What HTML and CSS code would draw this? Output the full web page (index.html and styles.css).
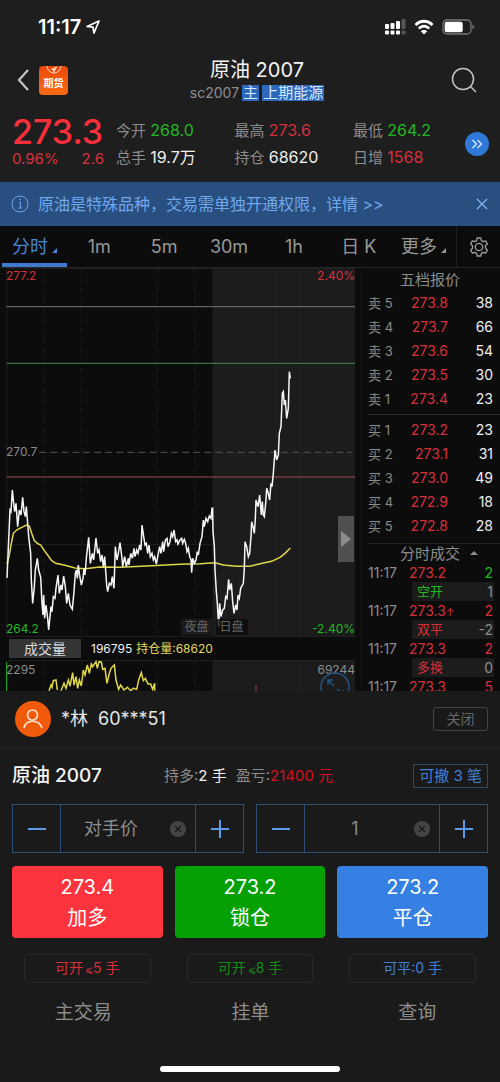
FILE: index.html
```html
<!DOCTYPE html>
<html lang="zh-CN">
<head>
    <meta charset="UTF-8">
    <meta name="viewport" content="width=device-width, initial-scale=1.0">
    <title>原油 2007</title>
    <link rel="stylesheet" href="styles.css">
</head>
<body>

    <div class="status-bar">
        <div class="status-time">
            <span>11:17</span>
            <svg width="14" height="14" viewBox="0 0 14 14"><path d="M1 6.500 13 1 8 13 7 7.200z" fill="none" stroke="#fff" stroke-width="1.700" stroke-linejoin="round"/></svg>
        </div>
        <div class="status-icons">
            <svg width="21" height="16" viewBox="0 0 21 16" fill="#fff">
                <rect x="0" y="5" width="4" height="5" rx="1"/><rect x="5.500" y="4" width="4" height="6" rx="1"/><rect x="11" y="2" width="4" height="8" rx="1"/><rect x="16.500" y="0" width="4" height="10" rx="1" fill="#555"/>
                <rect x="0" y="11.500" width="4" height="4" rx="1"/><rect x="5.500" y="11.500" width="4" height="4" rx="1"/><rect x="11" y="11.500" width="4" height="4" rx="1"/><rect x="16.500" y="11.500" width="4" height="4" rx="1" fill="#555"/>
            </svg>
            <svg width="20" height="16" viewBox="0 0 20 16" fill="none" stroke="#fff" stroke-width="2.800">
                <path d="M1.500 6C6.500 1 13.500 1 18.500 6"/><path d="M4.800 9.500C8 6.300 12 6.300 15.200 9.500"/><path d="M10 15.500 6.800 12.200C8.600 10.500 11.400 10.500 13.200 12.200z" fill="#fff" stroke="none"/>
            </svg>
            <svg width="33" height="16" viewBox="0 0 33 16">
                <rect x="1" y="1" width="28" height="14" rx="4" fill="none" stroke="#777" stroke-width="1.300"/><rect x="2.700" y="2.700" width="18" height="10.600" rx="2" fill="#fff"/><path d="M30.500 5.500v5q1.700-1 1.700-2.500t-1.700-2.500z" fill="#777"/>
            </svg>
        </div>
    </div>

    <header class="header">
        <div class="header-left">
            <a href="#" aria-label="返回"><svg width="20" height="24" viewBox="0 0 20 24"><path d="M16 2 7 12l9 10" fill="none" stroke="#c8c8c8" stroke-width="2.200"/></svg></a>
            <a href="#" class="logo">
                <svg width="16" height="9" viewBox="0 0 16 9" fill="none" stroke="#ffd9c2"><path d="M1 0a7 7 0 0 0 14 0"/><path d="M10.500 1 5.500 3.500 8 4l-.5 2.500z" fill="#ffd9c2"/></svg>
                <span>期货</span>
            </a>
        </div>
        <div class="header-title">
            <h1>原油 2007</h1>
            <div class="subtitle"><span>sc2007</span><span class="badge">主</span><span class="badge">上期能源</span></div>
        </div>
        <button type="button" class="icon-button search" aria-label="搜索"><svg width="26" height="26" viewBox="0 0 26 26" fill="none" stroke="#c4c4c4" stroke-width="1.500"><circle cx="12" cy="12" r="10.500"/><path d="m19.500 19.500 5.500 5.500"/></svg></button>
    </header>

    <section class="quote">
        <div class="last">
            <div class="last-price">273.3</div>
            <div class="last-change"><span>0.96%</span><span>2.6</span></div>
        </div>
        <div class="stats">
            <div>今开 <span class="green">268.0</span></div>
            <div>最高 <span class="red">273.6</span></div>
            <div>最低 <span class="green">264.2</span></div>
            <div>总手 <span class="white">19.7万</span></div>
            <div>持仓 <span class="white">68620</span></div>
            <div>日增 <span class="red">1568</span></div>
        </div>
        <button type="button" class="icon-button" aria-label="展开"><svg width="24" height="24" viewBox="0 0 24 24"><circle cx="12" cy="12" r="12" fill="#2f78d8"/><path d="m7.500 8 4 4-4 4M12.500 8l4 4-4 4" fill="none" stroke="#dbe9ff" stroke-width="1.300"/></svg></button>
    </section>

    <div class="notice">
        <svg width="18" height="18" viewBox="0 0 18 18" fill="none" stroke="#6ca4e8"><circle cx="9" cy="9" r="8"/><path d="M8 7.500h1.500V13M7.500 13h4" /><path d="M8.500 4.500h1.500" stroke-width="1.500"/></svg>
        <a href="#">原油是特殊品种，交易需单独开通权限，详情 &gt;&gt;</a>
        <button type="button" class="icon-button" aria-label="关闭提示"><svg width="12" height="12" viewBox="0 0 12 12"><path d="m1 1 10 10M11 1 1 11" stroke="#80b5f2" stroke-width="1.300"/></svg></button>
    </div>

    <nav class="tabs">
        <button type="button" class="tab active">分时<i class="corner"></i></button>
        <button type="button" class="tab">1m</button>
        <button type="button" class="tab">5m</button>
        <button type="button" class="tab">30m</button>
        <button type="button" class="tab">1h</button>
        <button type="button" class="tab">日 K</button>
        <button type="button" class="tab">更多<i class="corner"></i></button>
        <button type="button" class="settings" aria-label="设置">
            <svg width="20" height="20" viewBox="0 0 20 20" fill="none" stroke="#a0a0a0" stroke-width="1.300" stroke-linejoin="round"><path d="M8.200 1h3.600l.6 2.600 1.700 1 2.500-.8 1.800 3.100-1.900 1.900v2.400l1.900 1.900-1.800 3.100-2.500-.8-1.700 1-.6 2.600H8.200l-.6-2.600-1.700-1-2.500.8-1.800-3.100 1.900-1.900V8.800L1.600 6.900l1.800-3.100 2.500.8 1.700-1z"/><circle cx="10" cy="10" r="3.700"/></svg>
        </button>
    </nav>

    <main class="market">
        <div class="charts">
            <div class="price-chart">
                <svg viewBox="0 0 1083 1107" preserveAspectRatio="none">
                    <rect class="day" x="638" y="0" width="427" height="1107"/>
                    <path class="grid" d="M131 0V1107M245 0V1107M471 0V1107M585 0V1107"/>
                    <path class="frame" d="M20 2H1065M20 0V1105H1065M20 830H1065M748 0V1107M830 0V1107M900 0V1107"/>
                    <path class="level-gray" d="M20 116H1065"/>
                    <path class="level-green" d="M20 286H1065"/>
                    <path class="level-mid" d="M118 553H1055"/>
                    <path class="level-red" d="M20 627H1065"/>
                    <g transform="translate(0 216)">
                        <polyline class="average" points="21,672 27,650 33,615 40,580 50,570 65,562 80,555 88,558 95,580 103,602 112,610 122,615 133,632 145,648 155,662 167,670 195,676 225,684 255,686 300,681 360,682 440,678 540,673 600,671 645,668 670,675 710,679 750,679 780,671 815,664 840,652 855,640 871,624"/>
                        <polyline class="price" points="21,714 30,510 33,515 37,450 41,490 44,515 48,490 53,560 58,510 63,525 68,472 72,515 76,530 79,500 83,550 86,590 92,640 94,720 98,790 103,740 106,690 112,655 116,690 122,712 126,790 129,825 131,765 134,835 138,795 143,835 146,870 150,830 153,800 156,815 160,770 165,775 168,745 174,705 178,760 183,735 186,750 191,708 196,740 200,790 205,760 210,795 217,808 222,755 226,700 229,690 232,715 235,675 238,700 244,735 249,715 252,685 255,705 259,655 266,592 271,670 277,640 281,660 288,594 293,640 297,630 302,665 306,645 310,680 314,650 320,735 323,755 328,730 333,735 337,710 342,745 346,620 351,660 355,640 360,608 366,655 368,680 374,650 379,680 385,655 387,675 392,640 397,655 402,625 405,650 410,630 414,640 419,615 423,630 426,555 431,590 435,615 439,610 443,640 447,615 451,650 456,640 460,660 464,650 469,672 475,640 479,620 483,640 488,605 491,635 496,600 501,595 504,620 510,605 514,580 518,590 522,570 527,605 531,600 534,612 540,600 545,595 548,610 553,598 557,610 561,635 565,625 569,650 573,660 575,698 578,655 583,670 588,660 592,635 595,645 600,610 606,590 610,540 613,560 618,535 623,545 628,528 633,535 636,505 638,505 639,575 643,620 645,690 649,755 652,790 656,860 659,790 663,830 668,810 673,805 677,770 681,775 686,718 689,750 694,730 698,785 702,820 707,795 711,810 714,765 718,775 722,745 730,730 733,685 735,605 740,620 745,650 749,640 753,590 755,545 759,560 763,580 766,535 768,480 774,500 779,465 784,525 787,485 790,525 793,530 798,480 800,445 805,460 809,480 813,430 816,440 820,400 825,330 830,360 835,345 838,280 843,260 847,160 850,155 853,195 856,180 860,235 865,205 868,95 871,115"/>
                    </g>
                </svg>
                <span class="axis top-left red">277.2</span>
                <span class="axis top-right red">2.40%</span>
                <span class="axis middle-left">270.7</span>
                <span class="axis bottom-left green">264.2</span>
                <span class="axis bottom-right green">-2.40%</span>
                <div class="sessions"><span>夜盘</span><span>日盘</span></div>
                <button type="button" class="drawer" aria-label="收起盘口"><svg width="10" height="16" viewBox="0 0 10 16"><path d="M0 0 10 8 0 16z" fill="#8c8c8c"/></svg></button>
            </div>
            <div class="volume-info">
                <button type="button">成交量</button>
                <span class="white">196795</span>
                <span class="yellow">持仓量:68620</span>
            </div>
            <div class="volume-chart">
                <svg viewBox="0 0 1083 93" preserveAspectRatio="none">
                    <rect class="day" x="638" y="0" width="427" height="93"/>
                    <path class="grid" d="M131 0V93M245 0V93M471 0V93M585 0V93"/>
                    <path class="frame" d="M20 2H1065M900 0V93"/>
                    <path class="volume-green" d="M20 6V93"/>
                    <path class="level-red" d="M768 76V93"/>
                    <polyline class="average" points="147,92 153,75 156,82 160,62 168,60 172,90"/>
                    <polyline class="average" points="183,92 192,70 198,85 205,60 210,78 218,38 222,75 228,50 233,85 238,60 244,78 250,30 255,45 262,15 268,40 274,12 278,20 288,5 292,25 297,5 304,6 308,28 315,25 321,70 328,40 333,25 343,15 348,60 356,88 362,75 372,90 382,82 392,92 400,85 410,88 416,60 424,38 430,62 436,55 444,72 452,72 458,88 464,70 464,92"/>
                </svg>
                <span class="axis top-left">2295</span>
                <span class="axis top-right">69244</span>
                <button type="button" class="expand" aria-label="全屏"><svg width="30" height="30" viewBox="0 0 30 30" fill="none" stroke="#25517f" stroke-width="1.500"><circle cx="15" cy="15" r="14"/><path d="m14 14-6-6M8 13V8h5M17 17l6 6M18 23h5v-5"/></svg></button>
            </div>
        </div>

        <aside class="depth">
            <h2>五档报价</h2>
            <table class="book">
                <tbody>
                    <tr><th>卖 5</th><td>273.8</td><td>38</td></tr>
                    <tr><th>卖 4</th><td>273.7</td><td>66</td></tr>
                    <tr><th>卖 3</th><td>273.6</td><td>54</td></tr>
                    <tr><th>卖 2</th><td>273.5</td><td>30</td></tr>
                    <tr><th>卖 1</th><td>273.4</td><td>23</td></tr>
                </tbody>
            </table>
            <table class="book buy">
                <tbody>
                    <tr><th>买 1</th><td>273.2</td><td>23</td></tr>
                    <tr><th>买 2</th><td>273.1</td><td>31</td></tr>
                    <tr><th>买 3</th><td>273.0</td><td>49</td></tr>
                    <tr><th>买 4</th><td>272.9</td><td>18</td></tr>
                    <tr><th>买 5</th><td>272.8</td><td>28</td></tr>
                </tbody>
            </table>
            <h2 class="trades-title">分时成交<i class="up"></i></h2>
            <div class="trades">
                <div class="trade"><span>11:17</span><span class="red">273.2</span><span class="green">2</span></div>
                <div class="trade-type"><span class="green">空开</span><span>1</span></div>
                <div class="trade"><span>11:17</span><span class="red">273.3<small>↑</small></span><span class="red">2</span></div>
                <div class="trade-type"><span class="red">双平</span><span>-2</span></div>
                <div class="trade"><span>11:17</span><span class="red">273.3</span><span class="red">2</span></div>
                <div class="trade-type"><span class="red">多换</span><span>0</span></div>
                <div class="trade"><span>11:17</span><span class="red">273.3</span><span class="red">5</span></div>
            </div>
        </aside>
    </main>

    <section class="account">
        <svg width="36" height="36" viewBox="0 0 36 36"><circle cx="18" cy="18" r="18" fill="#f05a0a"/><g fill="none" stroke="#ffe3d0" stroke-width="1.700"><circle cx="17.500" cy="14" r="5"/><path d="M9 27c2-9 15-9 18 0"/></g></svg>
        <span>*林</span>
        <span>60***51</span>
        <button type="button">关闭</button>
    </section>

    <section class="order">
        <div class="position">
            <h2>原油 2007</h2>
            <div class="holding">持多:<span class="white">2 手</span></div>
            <div class="profit">盈亏:<span class="bright-red">21400 元</span></div>
            <button type="button">可撤 3 笔</button>
        </div>

        <div class="steppers">
            <div class="stepper">
                <button type="button" aria-label="减价"><svg width="18" height="18" viewBox="0 0 18 18"><path d="M0 9h18" stroke="#5b9bea" stroke-width="2"/></svg></button>
                <input type="text" value="对手价" aria-label="价格">
                <button type="button" class="clear" aria-label="清除价格"><svg width="16" height="16" viewBox="0 0 16 16"><circle cx="8" cy="8" r="8" fill="#444"/><path d="m5 5 6 6m0-6-6 6" stroke="#1b1b1b" stroke-width="1.500"/></svg></button>
                <button type="button" aria-label="加价"><svg width="18" height="18" viewBox="0 0 18 18"><path d="M0 9h18M9 0v18" stroke="#5b9bea" stroke-width="2"/></svg></button>
            </div>
            <div class="stepper">
                <button type="button" aria-label="减少手数"><svg width="18" height="18" viewBox="0 0 18 18"><path d="M0 9h18" stroke="#5b9bea" stroke-width="2"/></svg></button>
                <input type="text" value="1" aria-label="手数">
                <button type="button" class="clear" aria-label="清除手数"><svg width="16" height="16" viewBox="0 0 16 16"><circle cx="8" cy="8" r="8" fill="#444"/><path d="m5 5 6 6m0-6-6 6" stroke="#1b1b1b" stroke-width="1.500"/></svg></button>
                <button type="button" aria-label="增加手数"><svg width="18" height="18" viewBox="0 0 18 18"><path d="M0 9h18M9 0v18" stroke="#5b9bea" stroke-width="2"/></svg></button>
            </div>
        </div>

        <div class="actions">
            <button type="button" class="action add">273.4<br>加多</button>
            <button type="button" class="action lock">273.2<br>锁仓</button>
            <button type="button" class="action close">273.2<br>平仓</button>
            <div class="limit limit-add">可开<small>⩽</small>5 手</div>
            <div class="limit limit-lock">可开<small>⩽</small>8 手</div>
            <div class="limit limit-close">可平:0 手</div>
        </div>
    </section>

    <nav class="bottom-nav">
        <a href="#">主交易</a>
        <a href="#">挂单</a>
        <a href="#">查询</a>
    </nav>
    <div class="home-indicator"></div>

</body>
</html>
```

FILE: styles.css
```css
* {
    box-sizing: border-box;
}

body {
    margin: 0;
    background-color: #1a1a1a;
    color: #8c8c8c;
    font-family: Inter, "Noto Sans CJK SC", sans-serif;
    font-size: 15px;
    line-height: 20px;
}

h1,
h2 {
    margin: 0;
    font-weight: 400;
}

a {
    color: inherit;
    text-decoration: none;
}

svg {
    display: block;
}

button,
input {
    font-family: inherit;
    font-size: inherit;
    line-height: inherit;
    color: inherit;
    background: none;
    border: none;
    border-radius: 0;
    margin: 0;
    padding: 0;
}

button {
    cursor: pointer;
}

.red { color: #d8303a; }
.bright-red { color: #d50f1c; }
.green { color: #22b822; }
.white { color: #f0f0f0; }
.yellow { color: #e0d860; }

/* Status bar */
.status-bar {
    display: flex;
    justify-content: space-between;
    align-items: center;
    height: 54px;
    padding: 0 25px 0 38px;
    background-color: #1e1e1e;
    color: #fff;
}

.status-time,
.status-icons {
    display: flex;
    align-items: center;
    gap: 5px;
    font-size: 20px;
    font-weight: 600;
}

.status-icons {
    gap: 8px;
}

/* Header */
.header {
    display: grid;
    grid-template-columns: 1fr auto 1fr;
    align-items: center;
    height: 52px;
    padding: 0 12px;
    background-color: #1e1e1e;
}

.header-left {
    display: flex;
    align-items: center;
    gap: 7px;
}

.logo {
    display: flex;
    flex-direction: column;
    align-items: center;
    width: 29px;
    height: 29px;
    border-radius: 4px;
    background: linear-gradient(#ea4a0c, #fa6a14);
    color: #fff;
    font-size: 10px;
    font-weight: 700;
    line-height: 16px;
}

.header-title {
    padding-left: 14px;
    text-align: center;
}

.header-title h1 {
    color: #f4f4f4;
    font-size: 20px;
    line-height: 26px;
}

.subtitle {
    display: flex;
    align-items: center;
    gap: 3px;
    font-size: 14px;
}

.badge {
    padding: 0 1px;
    background-color: #2c69ba;
    color: #d8e8ff;
    font-size: 15px;
    line-height: 16px;
}

.icon-button {
    justify-self: end;
}

.search {
    padding-right: 11px;
}

/* Quote */
.quote {
    display: flex;
    align-items: center;
    height: 76px;
    padding: 0 11px 0 12px;
    background-color: #1e1e1e;
}

.last {
    width: 104px;
    padding: 0 12px 4px 0;
}

.last-price {
    color: #fb2f3a;
    font-size: 34px;
    font-weight: 500;
    line-height: 34px;
}

.last-change {
    display: flex;
    justify-content: space-between;
    color: #d8303a;
    line-height: 20px;
}

.stats {
    flex: 1;
    display: grid;
    grid-template-columns: 1fr 1fr 112px;
    line-height: 27px;
}

.stats span {
    font-size: 16px;
}

/* Notice */
.notice {
    display: flex;
    align-items: center;
    gap: 9px;
    height: 44px;
    padding: 0 12px 0 11px;
    background-color: #294f80;
    color: #6fa8ec;
    font-size: 16px;
}

.notice a {
    flex: 1;
}

/* Period tabs */
.tabs {
    display: flex;
    height: 42px;
    padding-left: 2px;
    background-color: #0c0c0c;
    border-bottom: 1px solid #262626;
    color: #989898;
    font-size: 18px;
}

.tab {
    flex: 1;
    padding-top: 4px;
    border-bottom: 4px solid transparent;
}

.active {
    color: #4a87d8;
    border-bottom-color: #3f7ad0;
}

.corner {
    display: inline-block;
    margin-left: 4px;
    border-left: 5px solid transparent;
    border-bottom: 5px solid currentColor;
}

.settings {
    display: flex;
    align-items: center;
    justify-content: center;
    width: 44px;
    border-left: 1px solid #1e1e1e;
}

/* Charts */
.market {
    display: flex;
    height: 423px;
    overflow: hidden;
    background-color: #0c0c0c;
}

.charts {
    flex: 1;
    min-width: 0;
}

.charts > div {
    position: relative;
}

.price-chart > svg,
.volume-chart > svg {
    width: 100%;
    height: 369px;
}

.volume-chart > svg {
    height: 31px;
}

.charts path,
.charts polyline {
    fill: none;
    vector-effect: non-scaling-stroke;
}

.charts .drawer path {
    fill: #8c8c8c;
}

.day { fill: #1c1c1c; }
.grid { stroke: #1e1e1e; stroke-dasharray: 5 5; }
.frame { stroke: #202020; }
.level-gray { stroke: #777; }
.level-green { stroke: #4a8a50; }
.level-mid { stroke: #555; stroke-dasharray: 7 4; }
.level-red { stroke: #a04a4a; }
.volume-green { stroke: #22b822; }
.average { stroke: #e0d84a; stroke-width: 1.5px; }
.price { stroke: #f6f6f6; stroke-width: 1.5px; }

.axis {
    position: absolute;
    font-size: 12px;
    line-height: 16px;
}

.top-left { top: 0; left: 6px; }
.top-right { top: 0; right: 6px; }
.middle-left { top: 176px; left: 6px; }
.bottom-left { bottom: 0; left: 6px; }
.bottom-right { bottom: 0; right: 6px; }

.volume-chart .axis {
    top: 2px;
}

.sessions {
    position: absolute;
    bottom: 2px;
    left: 50%;
    display: flex;
    gap: 3px;
    font-size: 12px;
    line-height: 16px;
    color: #666;
}

.sessions span {
    padding: 0 4px;
    background-color: rgba(30, 30, 30, 0.8);
}

.sessions span:last-child {
    background-color: rgba(12, 12, 12, 0.8);
}

.drawer {
    position: absolute;
    top: 248px;
    right: 7px;
    width: 16px;
    height: 46px;
    padding-left: 3px;
    background-color: #505050;
}

.volume-info {
    display: flex;
    align-items: center;
    gap: 4px;
    height: 23px;
    padding-left: 9px;
    font-size: 12px;
}

.volume-info button {
    width: 72px;
    margin-right: 6px;
    background-color: #343434;
    color: #ddd;
    font-size: 14px;
    line-height: 19px;
}

.expand {
    position: absolute;
    top: 12px;
    right: 11px;
}

/* Order book and trades */
.depth {
    width: 139px;
    padding-left: 6px;
    border-left: 1px solid #141414;
    font-size: 14px;
}

.depth h2 {
    padding-right: 8px;
    font-size: 15px;
    line-height: 23px;
    text-align: center;
}

.book {
    width: 100%;
    border-spacing: 0;
    table-layout: fixed;
}

.book th,
.book td {
    width: 46px;
    height: 24px;
    padding: 0;
    font-weight: 400;
    text-align: right;
    color: #f0f0f0;
}

.book th {
    width: 34px;
    color: #8c8c8c;
    font-size: 13px;
    text-align: left;
}

.book th + td {
    color: #d8303a;
}

.book td:last-child {
    width: 52px;
    padding-right: 7px;
}

.buy {
    margin-top: 3px;
    padding-top: 3px;
    border-top: 1px solid #2c2c2c;
}

.depth .trades-title {
    margin-top: 5px;
    padding: 0 0 0 10px;
    border-top: 1px solid #222;
    line-height: 19px;
}

.up {
    display: inline-block;
    margin: 0 0 4px 10px;
    border: 4px solid transparent;
    border-top: none;
    border-bottom-color: #8c8c8c;
}

.trade,
.trade-type {
    display: flex;
    height: 19px;
    padding-right: 7px;
    line-height: 19px;
}

.trade span:first-child {
    width: 41px;
}

.trade span:last-child {
    margin-left: auto;
}

.trade small {
    font-size: 10px;
}

.trade-type {
    justify-content: space-between;
    margin: 0 6px 0 44px;
    padding: 0 1px 0 5px;
    background-color: #1c1c1c;
}

.trade-type span:first-child {
    font-size: 13px;
}

/* Account bar */
.account {
    display: flex;
    align-items: center;
    gap: 10px;
    height: 57px;
    padding: 0 12px 0 15px;
    border-bottom: 1px solid #222;
    color: #e6e6e6;
    font-size: 18px;
}

.account button {
    width: 55px;
    margin-left: auto;
    border: 1px solid #444;
    border-radius: 3px;
    color: #666;
    font-size: 14px;
    line-height: 22px;
}

/* Order panel */
.order {
    padding: 0 12px;
}

.position {
    display: flex;
    align-items: center;
    gap: 9px;
    height: 56px;
}

.position h2 {
    width: 143px;
    color: #f4f4f4;
    font-size: 19px;
    font-weight: 500;
}

.position button {
    margin-left: auto;
    padding: 0 5px;
    border: 1px solid #2c4870;
    color: #4080d8;
    line-height: 22px;
}

.steppers {
    display: grid;
    grid-template-columns: repeat(2, minmax(0, 1fr));
    gap: 12px;
}

.stepper {
    display: flex;
    height: 49px;
    border: 1px solid #2f4d75;
}

.stepper button {
    display: flex;
    flex-shrink: 0;
    align-items: center;
    justify-content: center;
    width: 48px;
    border-left: 1px solid #2f4d75;
}

.stepper button:first-child {
    border-left: none;
    border-right: 1px solid #2f4d75;
}

.stepper input {
    flex: 1;
    min-width: 0;
    text-align: center;
    font-size: 18px;
}

.stepper .clear {
    width: 34px;
    border: none;
}

.actions {
    display: grid;
    grid-template-columns: repeat(3, 1fr);
    gap: 16px 12px;
    margin-top: 13px;
    text-align: center;
}

.action {
    height: 72px;
    padding-top: 2px;
    border-radius: 4px;
    color: #fff;
    font-size: 20px;
    line-height: 31px;
}

.add { background-color: #fb343e; }
.lock { background-color: #04a004; }
.close { background-color: #3580e2; }

.limit {
    margin: 0 12px;
    border: 1px solid #292929;
    border-radius: 4px;
    font-size: 14px;
    line-height: 25px;
}

.limit small {
    margin-left: 2px;
    font-size: 10px;
}

.limit-add { color: #d8303a; }
.limit-lock { color: #148c14; }
.limit-close { color: #4080d8; }

/* Bottom navigation */
.bottom-nav {
    display: grid;
    grid-template-columns: repeat(3, 1fr);
    margin-top: 17px;
    text-align: center;
    font-size: 19px;
    line-height: 26px;
}

.bottom-nav a + a {
    border-left: 1px solid #1e1e1e;
}

.home-indicator {
    width: 36%;
    height: 6px;
    margin: 40px auto 10px;
    border-radius: 3px;
    background-color: #fff;
}
```
